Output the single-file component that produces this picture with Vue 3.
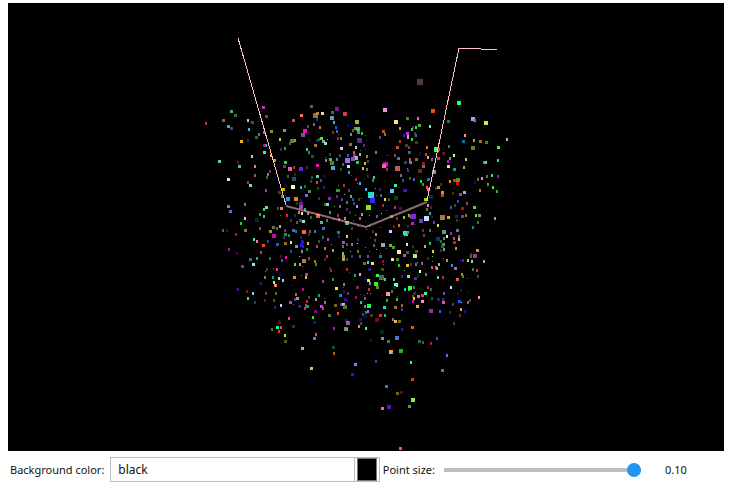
<script setup>
import { computed, ref } from 'vue'

const background = ref('black')
const pointSize = ref(0.1)

// Each cluster has an origin; its entries are "x,y,size,colour",
// with x and y of the point's centre in thirds of a scene unit.
const clusters = [
  { x: 195, y: 75, points: '32,145,2,a04060 85,136,3,b05a10 109,110,3,50b070 121,122,3,406a28 158,135,2,f0c030 172,143,3,2a6060 101,154,3,20b0e0 109,160,3,40408a 162,161,2,30b0e0 205,96,3,c030c0 214,123,3,c82050 295,137,3,e05030 319,122,3,ff7050 268,167,3,909a48 229,169,3,8a9018 192,176,2,5a7a90 207,172,2,9080b0 184,187,3,406018 139,200,3,f0b020 158,196,2,303020 254,193,2,c0d060 291,198,4,509010 301,195,2,b09020 284,204,2,6a40a0 258,223,2,501080 269,220,2,30a050 212,209,2,40a0c0 207,211,2,b01080 208,233,3,40f090 228,240,2,ffa060 170,244,2,b0e090 73,260,3,60d0a0 129,260,2,700828 238,257,3,d0a020 271,263,3,20e040' },
  { x: 300, y: 75, points: '34,95,3,3a6090 4,122,3,ff7058 110,103,4,702080 97,113,3,507010 46,120,5,9a7038 53,114,3,b08850 67,116,3,f0d0b8 135,116,4,d83850 255,105,4,f090d8 96,129,4,50a0d8 51,132,2,104850 102,141,2,70a8b0 322,131,3,409a20 288,142,4,ffe080 171,141,4,98b840 42,148,2,b04898 24,152,2,106858 60,156,2,a09018 108,157,2,1860f0 144,151,2,0000b0 14,168,4,ff00d8 9,179,4,8a4898 111,169,2,4060c0 99,170,2,903010 158,165,2,904820 166,159,3,8a8858 174,162,4,38c868 176,173,3,b050b0 250,170,3,d85010 255,177,2,209890 300,160,2,a8a860 153,178,2,60a070 186,174,2,30c820 196,180,1,208020 64,189,3,30f820 51,195,2,402070 57,192,2,207040 71,199,3,b088d0 76,206,3,70f898 82,194,1,80c0a0 114,188,2,902080 123,190,2,50a030 115,177,1,804010 28,197,3,380010 46,212,3,a87830 21,223,2,30e070 27,232,2,2880c0 178,197,5,483878 199,196,1,403070 240,187,2,4848a8 312,180,2,5010c0 322,175,3,b060e0 324,184,2,e0a0a0 300,199,2,a04030 151,209,3,c05060 124,221,3,ffa8f0 168,216,2,98d0f0 192,209,2,503080 196,222,1,504020 181,225,1,408050 180,236,2,c0b090 292,217,3,c05030 320,211,2,285030 327,232,2,308090 228,232,2,c06080 90,237,2,801848 120,240,2,206028 162,232,2,d86010 144,241,2,2850d0 162,241,3,a82060 38,245,3,305018 75,246,1,309050 77,256,2,c07080 91,252,3,10d080 111,252,2,6878a8 167,250,4,c8a0d0 160,251,4,7860a0 201,244,2,b87820 142,256,5,b060f0 172,262,3,18e018 96,263,4,608010 129,267,2,207080 195,265,2,e0c020 262,240,1,b04080 285,240,2,904070 295,251,3,1888c8 317,263,3,284878 205,258,2,404060 255,268,5,c018a0' },
  { x: 405, y: 75, points: '45,22,6,503850 162,84,4,20ff80 84,107,4,ff4800 39,128,2,f070b0 7,131,3,409020 130,140,3,187878 43,152,3,60a038 75,152,2,60ffc0 204,132,4,d090ff 209,137,3,6878b8 243,143,4,d8e050 24,156,2,682050 32,157,2,20e050 21,163,2,60b848 7,176,3,b030f0 29,175,2,403060 33,181,2,5060b0 10,185,2,e09898 20,192,2,20e048 34,203,3,204830 2,209,2,205038 66,216,2,e07030 12,217,2,a03820 94,224,5,30ff70 103,223,2,e05010 15,232,2,3050d0 46,235,2,200848 63,236,2,d84028 131,213,2,308050 116,236,3,601820 180,180,2,f09888 175,199,3,1070a0 207,196,2,90b058 226,199,3,b86018 244,202,3,10a020 204,218,4,708018 281,218,3,58f018 306,191,2,b8a0f0 147,239,2,c0ff98 156,245,1,504060 183,253,2,c0c080 136,248,2,60a048 69,247,2,f0a890 81,252,2,9850a8 101,251,3,d82898 129,259,2,c008f0 34,254,3,608040 54,264,3,901848 15,253,2,f03860 16,263,3,709070 236,260,2,60b030 242,262,2,60d098 279,254,2,10d8f0' },
  { x: 195, y: 165, points: '133,3,3,20d0a8 180,4,2,e08080 180,30,2,a05830 100,44,3,b0ffd0 225,19,2,a00898 219,28,2,20b060 216,36,2,207810 159,52,2,d800c0 166,60,3,50f888 213,74,2,805890 269,4,3,704060 285,11,4,f060a8 297,7,2,b82810 317,13,4,7828e0 300,26,2,501018 278,32,2,605030 297,43,4,106060 295,67,4,ffffc8 318,67,2,1898a0 270,56,2,080850 265,73,3,d0b000 254,82,3,484018 263,94,3,708818 279,103,4,3090f0 302,103,4,e08810 318,104,2,281868 306,113,2,104810 318,118,4,6020a0 100,124,3,a08840 106,139,3,8850e0 150,118,2,708840 150,160,2,f0b0e8 138,175,2,10e010 187,165,4,082818 214,126,3,50ff40 207,133,2,40d090 249,130,2,286818 259,129,3,f08070 195,148,2,00c820 207,154,2,30d060 276,149,2,ff1818 256,151,1,308010 300,151,2,282860 288,166,2,682030 312,141,2,b09838 321,145,2,ffe0a0 307,171,2,506030 316,167,3,5038a0 326,170,3,a0e0b0 84,196,2,108080 96,195,2,181878 150,195,3,b06838 123,208,2,c80078 195,190,2,c03038 235,188,3,707058 246,189,2,408030 255,184,2,90c098 226,199,3,b09018 238,212,4,c010a0 270,196,2,9818a0 295,195,3,4860f0 304,197,2,387060 325,203,3,ff6058 177,223,2,40f0a0 186,229,2,f080a0 219,228,2,205088 267,217,2,183870 271,209,3,508820 282,211,2,108868 317,216,2,201860 205,241,3,e05020 247,237,3,2058e8 271,235,3,907010 288,232,2,e0ff28 304,245,3,10d098 322,231,3,3800ff 323,244,2,3020a0 288,257,2,205870 102,252,2,c00898 126,265,2,400850 198,262,2,d03860 319,266,1,3020c0' },
  { x: 300, y: 165, points: '3,12,4,6028d0 22,5,2,502060 52,2,3,f018c0 99,10,4,60a0d0 123,13,2,105828 145,3,3,a0fff0 148,20,2,3898d0 190,8,2,e8a890 202,13,2,608040 251,3,4,f060c8 262,13,2,b82828 293,11,5,b86068 325,15,2,5818e0 52,33,3,48d0b0 36,35,2,305058 32,48,2,205030 51,52,2,f04020 63,46,2,604070 72,35,3,180080 15,62,2,207048 3,67,2,18c0b8 28,78,3,489850 54,70,2,184828 72,65,2,202870 20,90,3,9850f8 88,101,3,b800ff 82,118,3,40ff98 56,99,2,204058 74,116,2,605828 112,76,3,20b018 117,75,2,309020 116,61,1,a06030 132,59,2,804030 147,75,2,803070 167,43,2,c01860 171,55,1,b06860 180,54,2,50a8d8 192,42,1,2040f0 204,34,2,203040 222,37,2,48d060 218,44,2,3080c0 153,32,1,a02038 286,62,3,40f090 302,31,2,806098 310,44,2,206068 276,78,4,60c8ff 313,75,3,5000e8 288,98,4,104010 198,73,2,50a8ff 212,91,6,28d8c8 217,105,5,2828f0 206,127,5,88e800 239,73,2,401860 225,71,1,70b050 229,91,1,5070a0 256,101,2,e8d840 242,91,2,406880 266,102,2,205850 249,120,2,a03838 152,94,2,80a080 158,103,2,206080 132,87,1,a0a060 110,92,2,603090 127,101,2,7030c0 142,111,2,308868 162,114,2,4048a0 177,103,2,304020 185,99,1,c05030 170,124,2,b090e0 142,131,2,502090 120,124,2,a05098 102,125,1,50a070 90,140,2,3090b0 2,125,4,a04098 15,131,2,30b0b0 23,144,2,d88070 53,152,4,ff5848 33,157,2,207040 64,172,3,60b898 70,191,3,2870ff 82,166,2,408020 100,164,1,d0a030 114,151,2,a03060 118,162,2,c05060 135,158,2,b09030 140,174,4,50b890 161,167,1,e02020 179,160,2,ff30b0 195,170,1,4020c0 176,185,1,6070d0 155,188,2,404038 150,142,2,402838 166,150,1,30b040 187,146,2,60d040 207,151,1,60c090 231,154,2,904090 243,145,1,e0d0a0 260,137,1,7050d0 286,125,2,b02878 302,129,3,401060 275,153,3,608810 292,159,2,902828 313,155,2,80d030 326,151,2,b0b040 282,183,2,702020 271,199,3,ffb8f0 297,180,2,a88040 323,184,2,2020a0 316,204,4,40ff90 12,202,4,f06858 30,199,2,905030 45,198,2,3080d0 27,208,2,402080 116,202,3,1878b8 116,212,2,302840 85,223,2,d030d0 69,215,2,207850 58,229,2,305038 7,229,3,1818c8 5,242,3,3010f0 6,257,2,8090a0 24,234,2,f0c030 20,251,2,109850 51,242,2,e03048 74,250,2,e86048 94,239,1,4090a0 98,255,2,90b020 130,233,3,7070c0 128,243,2,707838 141,214,2,e8d820 141,236,2,c03020 157,237,2,6088b0 173,221,2,103850 171,235,1,e0e0f0 200,192,1,ff4030 208,180,1,90d040 218,197,2,304028 228,208,2,e09030 240,187,1,208090 210,216,1,b03898 224,225,2,503878 249,239,4,88a8d0 271,242,3,70b020 280,247,3,38a050 297,262,4,ffe8a0 322,237,2,d0e8e0 322,262,3,406050 174,259,2,688010 196,247,1,30b080 207,258,1,9040d0 221,241,2,507028 229,252,1,d09070 241,265,1,4060d0 259,251,1,905020 151,260,1,e0b050 129,264,2,80c060' },
  { x: 405, y: 165, points: '7,10,1,808080 45,18,4,603018 55,3,3,a05850 87,20,4,70a888 130,4,3,ffd0c8 148,13,3,1098a0 177,7,2,b0a060 27,43,2,6858b8 15,40,2,207050 48,48,2,00f050 54,58,2,20b018 71,44,3,1870b0 66,65,2,e06060 69,73,2,ff7080 94,70,2,503010 100,68,3,c0a018 109,57,2,601830 135,49,2,f09030 158,45,4,489828 148,47,3,e02828 157,56,3,e0080f 112,81,3,ff8020 112,91,3,c04818 144,84,2,682008 166,87,3,b030c0 178,81,3,b0a0ff 78,97,4,003038 61,104,3,a0e000 2,75,2,5810e0 159,107,2,4038e0 210,52,2,0008c0 218,43,2,507828 231,38,2,f080b8 246,34,2,488040 261,29,2,40d090 279,34,2,703888 249,58,2,10c010 264,66,2,38e828 276,77,2,28c018 225,76,2,b07848 68,121,2,a8a0e0 66,132,2,588818 79,126,2,601838 75,144,2,30b898 81,153,2,201850 138,127,2,5850a8 150,119,2,305038 172,130,3,d00018 186,115,2,a03868 209,127,3,20f020 26,153,5,8020ff 15,154,2,a06000 64,159,5,d8d0ff 48,169,4,5848b8 22,175,3,c828a0 31,178,1,302020 87,170,2,9020d8 99,180,2,d8e838 112,156,5,b07838 130,156,3,c8b818 153,153,3,202860 172,153,3,6048b0 183,149,2,a07020 155,165,2,483020 164,166,1,404028 213,151,2,60e080 222,152,3,908858 219,172,2,388018 270,160,2,d09070 204,187,2,2080b0 2,207,4,20e0c8 9,201,2,a08038 54,196,2,703038 57,211,2,703080 76,196,2,407840 99,222,4,004070 117,202,4,609888 126,214,2,c8ffc0 117,220,2,708858 138,205,2,a030b0 157,196,3,906090 162,212,2,5080a8 162,223,2,ffa860 147,219,2,e84060 148,231,3,d02038 60,244,2,90d020 75,234,2,10d070 24,244,2,402818 34,258,3,604830 85,257,2,d8e020 109,228,2,108030 115,239,3,38b068 111,244,3,4050a0 109,255,2,303080 117,253,2,80a090 153,250,2,a8b018 217,255,3,e88830 198,268,2,403820' },
  { x: 195, y: 255, points: '142,34,3,a020b0 166,13,3,387070 175,27,3,80e8ff 186,10,2,10c040 225,10,2,208020 258,4,2,680040 261,15,2,5840f0 273,7,2,ff00c8 314,4,1,d8c010 325,18,3,ff8050 300,28,2,68e810 315,28,2,20f088 323,35,1,f03090 215,41,2,503838 211,49,1,709060 236,41,1,607038 246,41,2,f02890 254,56,2,0000c0 210,67,2,48a010 234,66,2,1890a8 252,70,2,d0e068 264,76,2,a8c8ff 298,66,3,ff8800 319,61,1,a07818 237,82,2,a8ff70 241,90,3,ff8080 198,85,2,481070 290,91,1,802018 129,102,2,601098 156,109,2,a01018 174,113,2,70d0ff 159,130,2,20e8a0 180,142,2,104878 213,113,2,803070 243,115,2,487028 210,136,2,482028 237,136,2,406010 240,157,2,282878 258,149,2,b0d8f8 303,118,2,c84880 307,129,3,98a080 300,131,2,5840a8 287,141,3,a050a8 296,147,1,408038 314,155,3,103848 324,103,2,c00898 329,161,1,ff3018 282,189,2,ff3888 252,197,2,401018 254,202,2,680818 231,221,2,408048 247,216,3,20ff80 258,217,2,e038b0 252,227,2,ff2018 295,214,3,402070 270,241,2,90ff40 271,258,3,506008' },
  { x: 300, y: 255, points: '12,17,4,c87040 26,9,2,606030 46,18,2,a88018 48,27,2,508040 76,12,2,203040 81,4,2,ff1828 90,38,2,202840 93,46,2,b81850 129,12,3,b0a070 130,3,3,a0a020 115,11,1,306030 142,13,2,404080 141,41,2,b03028 148,52,1,206060 155,4,2,5020a0 180,4,2,1878a8 205,4,2,5850b8 193,24,3,508030 204,22,2,20f0a8 217,26,3,f8c8c0 241,4,3,008898 250,18,2,a80840 250,28,1,a07810 277,14,3,ffe0a0 293,13,3,508010 313,2,3,c050a0 297,30,2,18d828 322,32,3,e0c818 209,42,3,202878 247,43,3,305818 313,47,1,20b870 19,58,3,a038a8 19,67,2,e0c018 24,69,1,503020 49,69,1,401058 69,79,2,a838a8 99,73,2,507858 165,60,2,10b060 180,58,2,ffa0a8 195,70,2,0000b8 206,77,3,d0ff18 211,83,2,a080d0 232,60,3,30ff38 243,68,5,387848 254,71,2,50c0b8 228,87,4,20ff20 231,96,3,689018 283,73,2,58d0b8 306,64,2,3818c0 324,64,2,b0e820 288,89,4,70ffd8 282,97,3,103028 10,102,2,b808a0 109,101,3,e8e828 131,87,2,7080c8 129,96,1,902080 133,109,2,401830 144,114,2,504070 121,120,3,109098 173,98,3,703068 182,117,1,306040 207,102,2,c03828 203,115,1,e8b018 211,114,1,c09018 264,117,4,ff98a0 277,107,2,507058 315,103,2,10c8a0 327,102,2,20c010 56,120,2,1898a0 48,131,2,d08098 27,125,2,205050 21,137,2,d01858 74,142,2,a850e0 73,131,1,608020 18,149,2,c82878 22,154,3,00b068 15,160,2,d03830 2,154,1,8020c0 64,154,3,ff20ff 68,160,2,c04080 106,152,3,806018 123,146,2,2858c0 136,132,3,3810a0 130,149,3,e0b0e0 135,156,4,587818 143,140,1,404858 168,127,2,c00068 184,142,2,18c8b8 189,140,1,b82858 194,154,2,30a8a0 208,152,4,20ff50 195,129,2,308060 194,121,1,605888 261,134,2,10c018 248,122,1,102850 291,133,2,58c020 291,125,1,407048 306,149,2,b06818 306,162,2,3830d0 286,157,3,987818 253,157,3,28d8b8 46,169,3,8008a0 39,187,2,30f020 44,201,3,0010d8 88,180,3,488028 114,173,2,ff5000 102,219,2,c800f0 139,196,3,3800a8 144,204,4,906098 139,221,4,908038 139,222,3,70a898 177,214,2,c0a018 182,194,3,201838 183,204,2,4838a0 198,219,2,30f8a0 190,178,2,2848a8 203,169,2,9868f0 199,172,2,208088 196,184,3,001850 215,180,3,504008 241,181,3,ff1838 231,194,4,880028 255,179,2,28b088 280,191,2,7868b8 287,198,3,ffa850 298,198,3,508018 306,221,2,3818b0 43,249,3,9850f8 48,237,2,d84878 211,255,3,181838 247,251,3,50c080 265,259,3,288060 246,232,4,003008 291,249,4,2888c8 295,249,2,c020b0' },
  { x: 405, y: 255, points: '30,3,4,b0e890 69,8,2,203838 82,4,1,a0b070 18,28,2,502878 34,26,2,389068 38,21,1,a0a8ff 51,25,2,9858a8 59,31,1,302020 45,48,2,ffffc0 61,40,1,302080 81,35,2,f04090 83,18,1,808060 94,35,2,20c060 96,39,2,ff8080 102,28,2,90d820 115,10,1,508838 126,16,2,f88028 141,31,2,20a0a8 151,39,3,b060b0 167,16,1,8030e0 174,16,2,7800ff 189,14,2,90f030 201,19,2,b0c0e0 210,4,4,a03890 199,2,2,408010 237,19,2,b0a0b0 204,43,2,208838 216,44,2,ff1838 219,63,2,682888 171,56,2,c09000 174,64,2,10a028 187,71,1,d83030 157,72,3,d06050 138,96,2,d8d8ff 12,64,2,90ff18 31,69,3,6820c0 38,61,2,003828 63,56,2,608868 99,67,2,60d0a0 113,67,2,c02860 2,103,1,10f8c0 15,100,4,30ff50 27,96,2,208850 69,97,2,b81880 78,102,2,506818 28,116,3,582020 23,123,2,406028 27,130,2,d8e018 41,125,3,ff58c8 52,121,3,e030a0 61,116,3,28ff98 52,139,3,ff90d0 24,139,2,e800c0 37,153,3,ffa040 81,128,2,604018 100,133,3,182868 117,115,2,6850c8 114,131,2,105040 115,141,3,ff38d8 105,169,2,2860ff 78,168,4,803898 135,172,2,302850 144,146,2,4038a0 163,138,3,2058e0 169,143,1,a0a0ff 168,104,2,003018 159,113,2,201808 190,109,1,704010 195,135,2,106058 189,142,2,e030b0 222,127,2,ff88c0 168,163,2,f0a040 165,179,2,683028 180,169,2,2808a0 147,203,2,782060 22,216,3,d86028' },
  { x: 290, y: 335, points: '73,9,3,9850f8 37,41,3,70b8ff 130,37,3,184848 132,53,2,b06018 241,15,3,181038 277,11,3,48b878 295,18,3,308058 319,9,3,3090c0 325,8,1,d020b0 302,51,4,ffa838 307,51,1,00b0c8 333,47,4,28b028 388,18,3,107848 399,20,2,605040 423,25,2,b81848 440,9,2,2850f8 471,60,2,7868d0 457,106,3,488870 258,78,2,8020b0 196,88,3,8080d8 187,118,3,1818ff 64,100,3,b0d080 363,80,2,20ffb0 367,132,3,ff2800 289,154,3,4080a0 322,174,3,706810 334,172,3,780008 369,196,4,98e850 358,214,3,689820 277,220,3,ff6868 297,216,4,6010c0 331,340,3,ff5050' },
]

const points = computed(() =>
  clusters.flatMap((cluster) =>
    cluster.points.split(' ').map((entry) => {
      const [x, y, size, color] = entry.split(',')
      const s = Number(size) * (pointSize.value / 0.1)
      return {
        x: Math.round(cluster.x + x / 3 - s / 2),
        y: Math.round(cluster.y + y / 3 - s / 2),
        width: s,
        height: size === '2' ? s + 1 : s,
        color: '#' + color,
      }
    })
  )
)
</script>

<template>
  <main class="viewer">
    <svg
      class="scene"
      viewBox="8 3 716 448"
      role="img"
      aria-label="Point cloud with a line"
      :style="{ background }"
    >
      <g class="points">
        <rect
          v-for="(p, i) in points"
          :key="i"
          :x="p.x"
          :y="p.y"
          :width="p.width"
          :height="p.height"
          :fill="p.color"
        />
      </g>
      <polyline class="line near" points="238,38 286,205" />
      <polyline class="line far" points="286,206 366,227 427,202" />
      <polyline class="line near" points="427,201 459,48 481,49 497,50" />
    </svg>
    <form class="controls" @submit.prevent>
      <label for="background">Background color:</label>
      <div class="picker">
        <input id="background" v-model="background" class="name" type="text" />
        <button
          class="swatch"
          type="button"
          aria-label="Pick a color"
          :style="{ background }"
        ></button>
      </div>
      <label for="size">Point size:</label>
      <input
        id="size"
        v-model.number="pointSize"
        class="slider"
        type="range"
        min="0"
        max="0.1"
        step="0.01"
      />
      <output class="value" for="size">{{ pointSize.toFixed(2) }}</output>
    </form>
  </main>
</template>

<style>
body {
  background: #fff;
}
</style>

<style scoped>
.viewer {
  padding: 3px 9px 0 8px;
  font: 11px/25px "Noto Sans", "Open Sans", sans-serif;
  color: #111;
}

.scene {
  display: block;
  width: 100%;
}

.points {
  shape-rendering: crispEdges;
}

.line {
  fill: none;
  stroke: pink;
}

.near {
  shape-rendering: crispEdges;
}

.far {
  stroke-width: 2;
  opacity: 0.55;
}

.controls {
  display: flex;
  align-items: center;
  padding: 6px 0 0 2px;
}

.controls label {
  flex: none;
  white-space: nowrap;
}

.picker {
  display: flex;
  flex: 1 1 0;
  align-items: center;
  box-sizing: border-box;
  height: 25px;
  margin: 0 3px 0 6px;
  border: 1px solid #bdbdbd;
}

.name {
  flex: 1;
  box-sizing: border-box;
  min-width: 0;
  height: 23px;
  padding: 0 7px;
  border: 0;
  border-right: 1px solid #bdbdbd;
  background: #fff;
  color: #111;
  font: inherit;
  font-size: 12px;
  outline: none;
}

.swatch {
  width: 20px;
  height: 23px;
  margin: 0 2px;
  padding: 0;
  border: 1px solid #767676;
}

.slider {
  appearance: none;
  flex: none;
  width: 197px;
  height: 14px;
  margin: 0 24px 0 9px;
  background: linear-gradient(#bdbdbd, #bdbdbd) center / 100% 4px no-repeat;
}

.slider::-webkit-slider-thumb {
  appearance: none;
  width: 14px;
  height: 14px;
  border-radius: 50%;
  background: #2196f3;
}

.value {
  flex: none;
  width: 59px;
}
</style>
